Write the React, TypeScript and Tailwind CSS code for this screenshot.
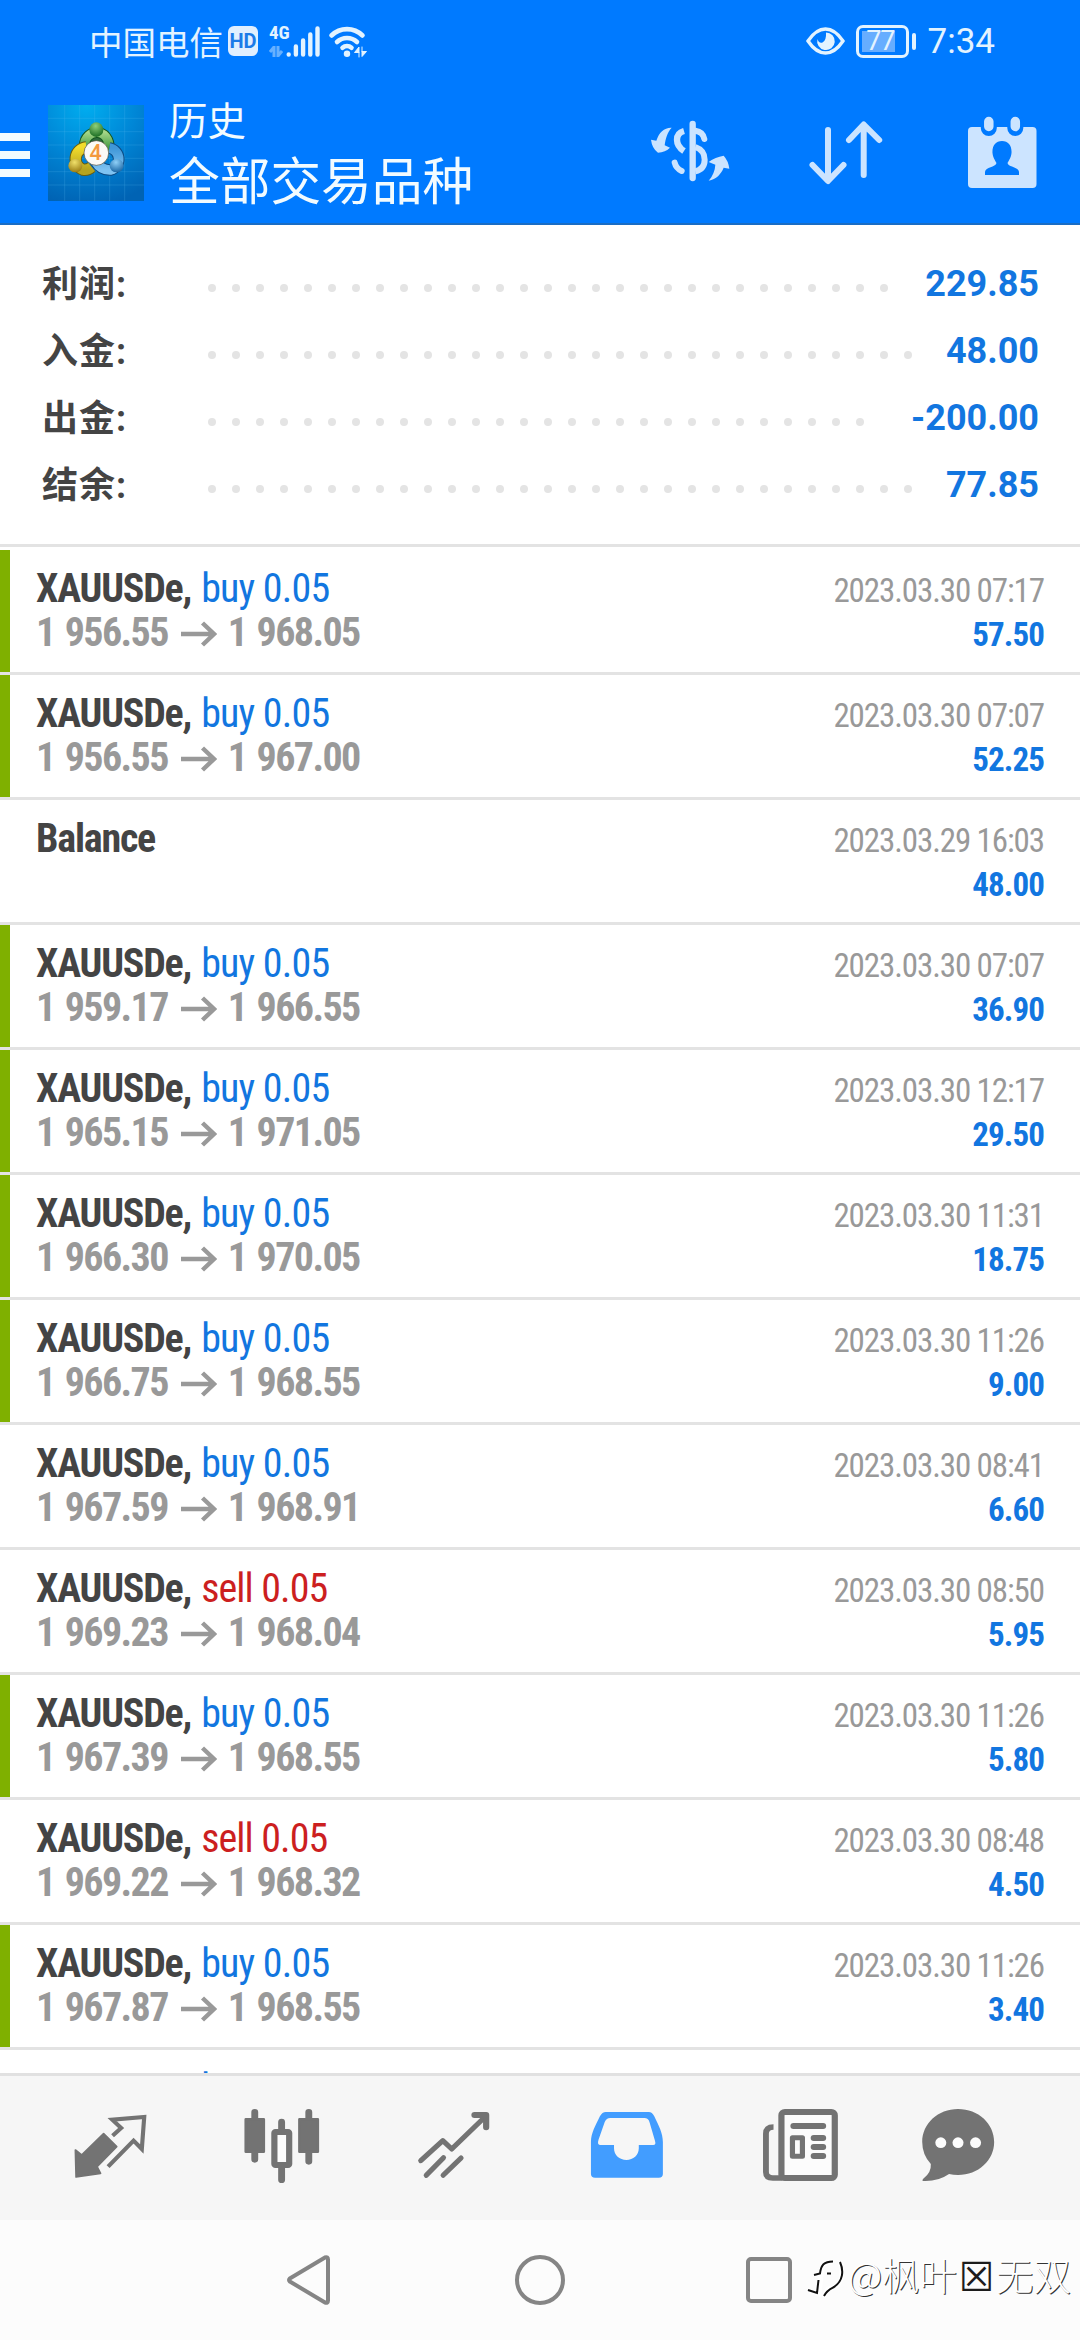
import React from "react";

type Deal = {
  symbol: string;
  side?: "buy" | "sell";
  open?: string;
  close?: string;
  time: string;
  profit: string;
  marked?: boolean;
};

const deals: Deal[] = [
  { symbol: "XAUUSDe", side: "buy", open: "1 956.55", close: "1 968.05", time: "2023.03.30 07:17", profit: "57.50", marked: true },
  { symbol: "XAUUSDe", side: "buy", open: "1 956.55", close: "1 967.00", time: "2023.03.30 07:07", profit: "52.25", marked: true },
  { symbol: "Balance", time: "2023.03.29 16:03", profit: "48.00" },
  { symbol: "XAUUSDe", side: "buy", open: "1 959.17", close: "1 966.55", time: "2023.03.30 07:07", profit: "36.90", marked: true },
  { symbol: "XAUUSDe", side: "buy", open: "1 965.15", close: "1 971.05", time: "2023.03.30 12:17", profit: "29.50", marked: true },
  { symbol: "XAUUSDe", side: "buy", open: "1 966.30", close: "1 970.05", time: "2023.03.30 11:31", profit: "18.75", marked: true },
  { symbol: "XAUUSDe", side: "buy", open: "1 966.75", close: "1 968.55", time: "2023.03.30 11:26", profit: "9.00", marked: true },
  { symbol: "XAUUSDe", side: "buy", open: "1 967.59", close: "1 968.91", time: "2023.03.30 08:41", profit: "6.60" },
  { symbol: "XAUUSDe", side: "sell", open: "1 969.23", close: "1 968.04", time: "2023.03.30 08:50", profit: "5.95" },
  { symbol: "XAUUSDe", side: "buy", open: "1 967.39", close: "1 968.55", time: "2023.03.30 11:26", profit: "5.80", marked: true },
  { symbol: "XAUUSDe", side: "sell", open: "1 969.22", close: "1 968.32", time: "2023.03.30 08:48", profit: "4.50" },
  { symbol: "XAUUSDe", side: "buy", open: "1 967.87", close: "1 968.55", time: "2023.03.30 11:26", profit: "3.40", marked: true },
  { symbol: "XAUUSDe", side: "buy", open: "", close: "", time: "", profit: "" },
];

const summary = [
  { label: "利润:", value: "229.85", dots: 29 },
  { label: "入金:", value: "48.00", dots: 30 },
  { label: "出金:", value: "-200.00", dots: 28 },
  { label: "结余:", value: "77.85", dots: 30 },
];

function StatusBar() {
  return (
    <div className="flex h-[82px] items-center justify-between pl-[89px] pr-[85px] text-[#e3f3ff]">
      <div className="flex items-center">
        <span className="w-[139px] whitespace-nowrap text-[33.5px] leading-[40px]">中国电信</span>
        <span className="flex h-[30px] w-[30px] items-center justify-center rounded-[6px] bg-[#e0efff] font-['Roboto'] text-[20px] leading-none font-bold text-[#1c7be8] [font-stretch:88%]">
          HD
        </span>
        <span className="ml-[11px] flex h-[31px] w-[18px] flex-col">
          <span className="h-[14px] font-['Roboto'] text-[19px] leading-[14px] font-bold [font-stretch:75%]">4G</span>
          <svg className="mt-[6px] h-[11px] w-[14px]" viewBox="0 0 14 11" fill="none" stroke="#66b0ff" strokeWidth="3">
            <path d="M5 11V1L1 6M9 0v10l4-5" />
          </svg>
        </span>
        <svg className="-ml-px h-[32px] w-[34px]" viewBox="285 24 34 32" stroke="currentColor" strokeWidth="4.4" strokeLinecap="round">
          <path d="M287.7 53.4v.2M294.9 45.5v8M302.1 39.5v14M309.3 33.5v20M316.5 27.5v26" />
        </svg>
        <svg className="ml-[8px] h-[34px] w-[40px]" viewBox="327 23 40 34" fill="none" stroke="currentColor" strokeWidth="4.6" strokeLinecap="round">
          <path d="M330.5 34.5a22 22 0 0 1 31 0M336 41a14.5 14.5 0 0 1 20 0M341.5 46.8a7 7 0 0 1 9 0" />
          <circle cx="346" cy="52.8" r="3.2" fill="currentColor" stroke="none" />
          <path d="M358 56V46l-4.500 5.500H358M361 46v9.500l4.500-5H361" fill="currentColor" strokeWidth="1" />
        </svg>
      </div>
      <div className="flex items-center">
        <svg className="h-[28px] w-[39px]" viewBox="0 0 39 28" fill="none">
          <path d="M2 14C8 5 13 2 19.500 2S31 5 37 14C31 23 26 26 19.500 26S8 23 2 14Z" stroke="currentColor" strokeWidth="3.4" />
          <path d="M20 5.500a8.800 8.800 0 1 1-8.500 6.500q1 4.500 5 3.500 4-2 3.500-10Z" fill="currentColor" />
        </svg>
        <div className="ml-[11px] flex h-[33px] w-[53px] items-center rounded-[7px] border-[3px] border-current p-[3px]">
          <div className="flex h-[21px] w-[33px] items-center justify-end bg-[#66adff] font-['Roboto'] text-[27px] leading-none tracking-[-1px] [font-stretch:88%]">77</div>
        </div>
        <div className="ml-[3px] h-[17px] w-[4px] rounded-sm bg-current" />
        <span className="mt-[2px] ml-[12px] font-['Roboto'] text-[35px] leading-[40px]">7:34</span>
      </div>
    </div>
  );
}

function AppLogo() {
  return (
    <svg className="h-[96px] w-[96px]" viewBox="24 14 288 288">
      <defs>
        <radialGradient id="sky" cx=".4" cy="0" r="1.05">
          <stop offset="0" stopColor="#00aef0" />
          <stop offset=".5" stopColor="#0086d6" />
          <stop offset="1" stopColor="#0063b4" />
        </radialGradient>
        <linearGradient id="green" x2="0" y2="1"><stop stopColor="#a5d687" /><stop offset="1" stopColor="#2f8f35" /></linearGradient>
        <linearGradient id="yellow" x2="0" y2="1"><stop stopColor="#f2dc2c" /><stop offset="1" stopColor="#b5a31f" /></linearGradient>
        <linearGradient id="blue" x2="0" y2="1"><stop stopColor="#3f97d8" /><stop offset="1" stopColor="#7fc3f2" /></linearGradient>
        <radialGradient id="gball" cx=".45" cy=".25" r=".8"><stop stopColor="#8fd07a" /><stop offset="1" stopColor="#12661c" /></radialGradient>
        <radialGradient id="yball" cx=".45" cy=".25" r=".8"><stop stopColor="#f0e06a" /><stop offset="1" stopColor="#94760e" /></radialGradient>
        <radialGradient id="bball" cx=".45" cy=".25" r=".8"><stop stopColor="#8fd0f8" /><stop offset="1" stopColor="#14609f" /></radialGradient>
      </defs>
      <path fill="url(#sky)" d="M24 14h288v288H24z" />
      <path d="M24 54h288M24 94h288M24 134h288M24 174h288M24 214h288M24 254h288M74 14v288M119 14v288M164 14v288M209 14v288M254 14v288" stroke="#5fc4f5" strokeOpacity=".2" strokeWidth="3" fill="none" />
      <g fill="none">
        <circle cx="168" cy="128" r="34" fill="#2c6b3c" />
        <path d="M133 138a37 40 0 1 1 71 14" stroke="#14561f" strokeWidth="33" />
        <path d="M133 138a37 40 0 1 1 71 14" stroke="url(#green)" strokeWidth="27" />
        <path d="M139 141a36 35 0 0 0-10 67q14 2 26-8" stroke="#6a5d0c" strokeWidth="37" />
        <path d="M139 141a36 35 0 0 0-10 67q14 2 26-8" stroke="url(#yellow)" strokeWidth="31" />
        <path d="M208 143a34 34 0 0 1 4 66q-30 1-46-26" stroke="#0d4a82" strokeWidth="35" />
        <path d="M208 143a34 34 0 0 1 4 66q-30 1-46-26" stroke="url(#blue)" strokeWidth="29" />
      </g>
      <ellipse cx="169" cy="88" rx="21" ry="22" fill="url(#gball)" />
      <ellipse cx="106" cy="196" rx="21" ry="20" fill="url(#yball)" />
      <ellipse cx="230" cy="196" rx="21" ry="20" fill="url(#bball)" />
      <circle cx="169" cy="158" r="37" fill="#fbfaf6" stroke="#4d4a3a" strokeWidth="2" />
      <text x="167" y="180" textAnchor="middle" fontFamily="Noto Sans" fontSize="62" fontWeight="600" fill="#f3993d">4</text>
    </svg>
  );
}

function Header() {
  return (
    <header className="h-[225px] border-b-2 border-[#1a6dc4] bg-[#007aff]">
      <StatusBar />
      <div className="flex h-[141px] items-start text-[#f2fbff]">
        <div className="mt-[51px] flex w-[30px] flex-col gap-[10px]">
          <div className="h-[8px] bg-current" />
          <div className="h-[8px] bg-current" />
          <div className="h-[8px] bg-current" />
        </div>
        <div className="mt-[23px] ml-[18px]"><AppLogo /></div>
        <div className="mt-[11px] ml-[25px] flex flex-1 flex-col whitespace-nowrap">
          <span className="text-[38.500px] leading-[50px]">历史</span>
          <span className="mt-[5px] text-[50.7px] leading-[60px]">全部交易品种</span>
        </div>
        <svg className="mt-[33px] h-[85px] w-[110px]" viewBox="0 0 330 255" fill="none" stroke="#cce4ff" strokeWidth="18">
          <path d="M158 27v162" strokeLinecap="round" strokeWidth="19" />
          <path d="M132 48Q111 54 111 74T132 108" strokeWidth="19" />
          <path d="M104 143Q108 160 125 168M166 47Q189 50 193 72" strokeLinecap="round" />
          <path d="M166 96Q194 106 194 134T166 169" />
          <path d="M95 38C73 37 57 52 49 77L33 74Q36 100 54 113Q76 112 90 98L74 91C77 70 82 52 95 38Z" fill="#cce4ff" stroke="none" />
          <path d="M206 197C229 192 243 178 251 158L268 161Q265 137 251 122Q226 126 206 141L226 149C225 167 218 183 206 197Z" fill="#cce4ff" stroke="none" />
        </svg>
        <svg className="mt-[33px] ml-[55px] h-[72px] w-[80px]" viewBox="805 115 80 72" fill="none" stroke="#cce4ff" strokeWidth="6" strokeLinecap="round" strokeLinejoin="round">
          <path d="M828 130v50M812.500 165l15.500 16 15.500-16M863.700 175v-50M849 140l14.700-15.500 15.500 15.500" />
        </svg>
        <svg className="mt-[34px] mr-[40px] ml-[78px] h-[74px] w-[77px]" viewBox="963 116 77 74">
          <rect x="968" y="127" width="68.500" height="61" rx="4" fill="#cce4ff" />
          <path d="M988.800 121.500v6.500M1015.300 121.500v6.500" stroke="#007aff" strokeWidth="16" strokeLinecap="round" />
          <path d="M988.800 121.500v5M1015.300 121.500v5" stroke="#cce4ff" strokeWidth="9.500" strokeLinecap="round" />
          <path d="M1002 141c6.500 0 10 5 9.500 12-.5 5-2.500 7-4 10 1 4.500 11 3.500 11.500 9v3h-34v-3c.5-5.500 10.500-4.500 11.500-9-1.500-3-3.500-5-4-10-.5-7 3-12 9.500-12Z" fill="#007aff" />
        </svg>
      </div>
    </header>
  );
}

function Summary() {
  return (
    <section className="flex h-[325px] flex-col pt-[24px] text-[36px]">
      <div className="h-[295px]">
        {summary.map((row) => (
          <div key={row.label} className="flex h-[67px] items-center pr-[41px] pl-[42px]">
            <span className="mt-[5px] w-[166px] font-['Roboto','Noto_Sans_CJK_SC'] font-bold tracking-[1px] text-[#444]">{row.label}</span>
            <span className="mt-[11px] flex flex-1 gap-[16px]">
              {Array.from({ length: row.dots }, (_, i) => (
                <i key={i} className="h-[8px] w-[8px] rounded-full bg-[#e4e4e4]" />
              ))}
            </span>
            <span className="mt-[3px] font-['Roboto'] font-bold text-[#1276e0]">{row.value}</span>
          </div>
        ))}
      </div>
      <div className="h-[3px] bg-[#e3e3e3]" />
    </section>
  );
}

function PriceArrow() {
  return (
    <svg className="mr-[11px] ml-[13px] mt-[2px] h-[26px] w-[36px]" viewBox="0 0 36 26" fill="none" stroke="currentColor" strokeWidth="4.400">
      <path d="M0 13h33M21.500 2l11.500 11-11.500 11" />
    </svg>
  );
}

function DealRow({ deal }: { deal: Deal }) {
  return (
    <li className="flex h-[125px] shrink-0 border-b-[3px] border-[#e3e3e3] font-['Roboto'] leading-[44px] whitespace-nowrap">
      <div className={deal.marked ? "w-[10px] bg-[#7fb000]" : "w-[10px]"} />
      <div className="flex flex-1 justify-between pr-[36px] pl-[26px]">
        <div className="pt-[17px] text-[40px] [font-stretch:75%]">
          <div>
            <span className="font-bold tracking-[-1.200px] text-[#444]">{deal.symbol}{deal.side && ","}</span>
            {deal.side && (
              <span className={deal.side === "buy" ? "tracking-[-0.800px] text-[#1276e0]" : "tracking-[-0.900px] text-[#cc1f1f]"}>
                <span className="inline-block w-[10px]"> </span>
                {deal.side} 0.05
              </span>
            )}
          </div>
          {deal.open && (
            <div className="flex items-center font-bold tracking-[-1.600px] text-[#999] [word-spacing:2.500px]">
              <span>{deal.open}</span>
              <PriceArrow />
              <span>{deal.close}</span>
            </div>
          )}
        </div>
        <div className="pt-[19px] text-right text-[33px] [font-stretch:75%]">
          <div className="tracking-[-1.100px] text-[#999]">{deal.time}</div>
          <div className="font-bold tracking-[-0.900px] text-[#1276e0]">{deal.profit}</div>
        </div>
      </div>
    </li>
  );
}

function TabIcon({ viewBox, children }: { viewBox: string; children: React.ReactNode }) {
  return (
    <div className="flex flex-1 items-center justify-center">
      <svg className="h-[80px] w-[82.600px] overflow-visible" viewBox={viewBox} preserveAspectRatio="none" fill="none" stroke="#737373" strokeLinejoin="round">
        {children}
      </svg>
    </div>
  );
}

function TabBar() {
  return (
    <nav className="flex h-[147px] border-t-[3px] border-[#e1e1e1] bg-[#f6f6f6] px-[24px]">
      <TabIcon viewBox="199.4 204 240 240">
        <path d="M218 330L236 345L300 281L338 320L281 380L291 400L220 411Z" fill="#737373" strokeWidth="5" />
        <path d="M326 287L351 264L325 239L418 231L411 327L387 302L313 380" strokeWidth="12" strokeLinejoin="miter" />
      </TabIcon>
      <TabIcon viewBox="699 204 240 240">
        <path d="M739 217V358M896 217V364M817 246V275M817 380V419" strokeWidth="20" strokeLinecap="round" />
        <path d="M713 238h52v97h-52zM869 238h53v97h-53z" fill="#737373" strokeWidth="8" />
        <rect x="796" y="276" width="43" height="99" rx="3" strokeWidth="18" fill="#fcfcfc" />
      </TabIcon>
      <TabIcon viewBox="1198.4 204 240 240">
        <path d="M1221 362L1285 302L1311 327L1405 233M1237 406L1287 353M1286 406L1338 354" strokeWidth="15" strokeLinecap="round" />
        <path d="M1377 225H1411V262" strokeWidth="18" strokeLinecap="round" />
      </TabIcon>
      <TabIcon viewBox="129.7 204 240 240">
        <path fillRule="evenodd" stroke="none" fill="#429dff" d="M190 216H315Q325 216 331 229C344 257 356 280 356 306V402Q356 413 344 413H159Q147 413 147 402V306C147 280 160 257 173 229Q180 216 190 216ZM203 234Q192 234 187 246L169 299Q164 315 175 315H214V325C214 346 230 360 250 360S286 346 286 325V315H328Q337 315 333 302L317 246Q314 234 302 234Z" />
      </TabIcon>
      <TabIcon viewBox="629 204 240 240">
        <rect x="700" y="216" width="155" height="198" rx="10" strokeWidth="18" fill="#fcfcfc" />
        <path d="M677 261Q655 261 655 281V396Q655 414 675 414H702" strokeWidth="17" />
        <path d="M735 258H821M794 294H821M794 321H821M794 348H821" strokeWidth="18" strokeLinecap="round" />
        <rect x="732" y="293" width="29" height="56" strokeWidth="15" />
      </TabIcon>
      <TabIcon viewBox="1128.7 204 240 240">
        <path fillRule="evenodd" stroke="none" fill="#737373" d="M1213 207C1272 207 1318 251 1318 306S1272 405 1213 405Q1199 405 1187 402Q1155 425 1112 423Q1107 422 1112 416Q1136 398 1134 372Q1109 344 1109 306C1109 251 1155 207 1213 207Z" />
        <g fill="#fcfcfc" stroke="none">
          <circle cx="1163" cy="308" r="16" />
          <circle cx="1213" cy="308" r="16" />
          <circle cx="1264" cy="308" r="16" />
        </g>
      </TabIcon>
    </nav>
  );
}

function Watermark() {
  return (
    <div className="absolute right-[9px] bottom-[41px] flex h-[50px] items-center text-[37.5px] leading-[50px] font-light whitespace-nowrap text-white [text-shadow:1px_1px_0_#333]">
      <svg className="mr-[4px] mt-[6px] h-[44px] w-[37px]" viewBox="0 0 37 44" fill="none">
        <path d="M3 36L12 39L14 20H8M16 42L21 34C36 32 37 18 33 7M26 7C15 6 15 13 14 19" stroke="#fff" strokeWidth="5" />
        <path d="M1 35L10 38L11.500 25M7 20l6-1.500C14 10 17 6.500 26 6.500M20 18.500h4M33 7c4 9 3 19-6 25-4 2-7 3-10 9" stroke="#111" strokeWidth="2" />
      </svg>
      <span>@枫叶</span>
      <span className="mt-[5px] w-[39px] text-center font-['DejaVu_Sans'] text-[40px] font-normal text-[#1c1c1c] [text-shadow:none]">☒</span>
      <span>无双</span>
    </div>
  );
}

function SystemNav() {
  return (
    <div className="relative flex h-[120px] items-center bg-[#fcfcfc] pl-[287px]">
      <svg className="h-[50px] w-[43px]" viewBox="0 0 43 50" fill="none" stroke="#858585" strokeWidth="4" strokeLinejoin="round">
        <path d="M2.800 23.500L38 2.500Q41 1.500 41 4.500V45.500Q41 48.500 38 47.500L2.800 26.500Q1.200 25 2.800 23.500Z" />
      </svg>
      <div className="ml-[185px] h-[50px] w-[50px] rounded-full border-[4px] border-[#858585]" />
      <div className="ml-[181px] h-[46px] w-[46px] rounded-[5px] border-[4px] border-[#858585]" />
      <Watermark />
    </div>
  );
}

export default function App() {
  return (
    <div className="flex h-[2340px] w-[1080px] flex-col overflow-hidden bg-white font-['Noto_Sans_CJK_SC',sans-serif]">
      <Header />
      <Summary />
      <ul className="flex h-[1523px] flex-col overflow-hidden">
        {deals.map((deal, i) => (
          <DealRow key={i} deal={deal} />
        ))}
      </ul>
      <TabBar />
      <SystemNav />
    </div>
  );
}
